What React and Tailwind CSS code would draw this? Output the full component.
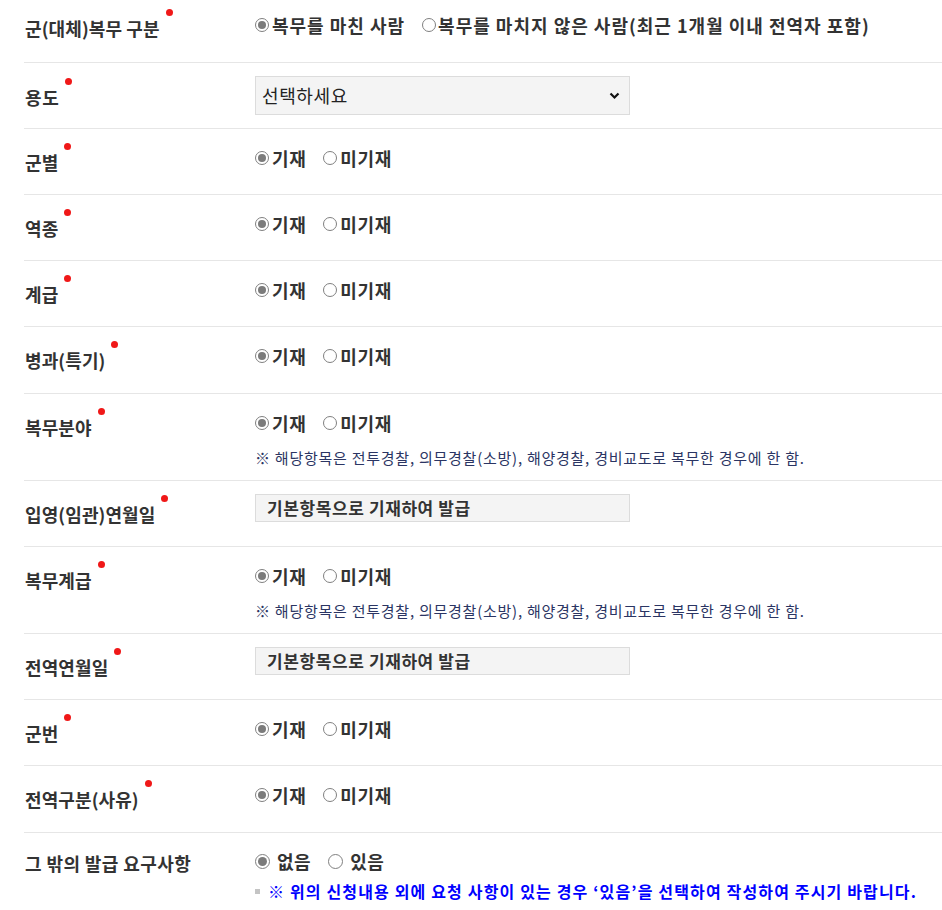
import React, { useState } from 'react';

const FONT = { fontFamily: '"Noto Sans CJK KR", "Noto Sans", sans-serif' };

// 단순 기재/미기재 항목
const rows = [
  { key: 'unit', label: '군별' },
  { key: 'kind', label: '역종' },
  { key: 'rank', label: '계급' },
  { key: 'branch', label: '병과(특기)', tall: true },
  { key: 'field', label: '복무분야', note: true },
  { key: 'enlist', label: '입영(임관)연월일', fixed: true },
  { key: 'svcRank', label: '복무계급', note: true },
  { key: 'discharge', label: '전역연월일', fixed: true },
  { key: 'number', label: '군번' },
  { key: 'reason', label: '전역구분(사유)', tall: true },
];

function Required({ children }) {
  return (
    <span className="relative inline-block">
      {children}
      <span className="absolute right-[-13px] top-[-7px] w-[7px] h-[7px] rounded-full bg-[#f01818]" />
    </span>
  );
}

function Radio({ checked, onClick, size = 'sm', children }) {
  const box = size === 'lg' ? 'w-[15px] h-[15px]' : 'w-[14px] h-[14px]';
  const dot = size === 'lg' ? 'w-[9px] h-[9px]' : 'w-[8px] h-[8px]';
  return (
    <label onClick={onClick} className="inline-flex items-center cursor-pointer">
      <span className={`${box} rounded-full border border-[#808080] bg-white flex items-center justify-center shrink-0`}>
        {checked && <span className={`${dot} rounded-full bg-[#7b7b7b]`} />}
      </span>
      {children}
    </label>
  );
}

function Note() {
  return (
    <p className="mt-[12px] text-[15px] leading-[22px] tracking-[0.75px] text-[#2b3563]">
      ※ 해당항목은 전투경찰, 의무경찰(소방), 해양경찰, 경비교도로 복무한 경우에 한 함.
    </p>
  );
}

function FixedBox() {
  return (
    <div className="mt-[-4px] w-[375px] h-[28px] bg-[#f4f4f4] border border-[#dcdcdc] pl-[11px] flex items-center text-[17px] tracking-[0.6px] font-bold text-[#333]">
      기본항목으로 기재하여 발급
    </div>
  );
}

export default function App() {
  const [values, setValues] = useState({});
  const [served, setServed] = useState('done');
  const [extra, setExtra] = useState('no');

  const pick = (key, v) => setValues((s) => ({ ...s, [key]: v }));

  return (
    <div style={FONT} className="bg-white w-[942px] min-h-[910px] text-[#333]">
      <div className="ml-[24px]">
        {/* 군(대체)복무 구분 */}
        <div className="flex h-[63px] border-b border-[#e6e6e6]">
          <div className="w-[231px] pl-[1px] pt-[16px] text-[18px] leading-[24px] tracking-[0.1px] font-bold">
            <Required>군(대체)복무 구분</Required>
          </div>
          <div className="pt-[13px] flex items-center h-[37px] text-[18px] leading-[24px] tracking-[1px] font-bold">
            <Radio checked={served === 'done'} onClick={() => setServed('done')}>
              <span className="ml-[3px]">복무를 마친 사람</span>
            </Radio>
            <span className="w-[17px]" />
            <Radio checked={served === 'not'} onClick={() => setServed('not')}>
              <span className="ml-[2px]">복무를 마치지 않은 사람(최근 1개월 이내 전역자 포함)</span>
            </Radio>
          </div>
        </div>

        {/* 용도 */}
        <div className="flex h-[66px] border-b border-[#e6e6e6]">
          <div className="w-[231px] pl-[1px] pt-[22px] text-[18px] leading-[24px] tracking-[0.6px] font-bold">
            <Required>용도</Required>
          </div>
          <div className="pt-[13px]">
            <div className="relative w-[375px] h-[39px]">
              <select
                style={FONT}
                className="appearance-none w-full h-full bg-[#f4f4f4] border border-[#dcdcdc] pl-[6px] text-[18px] tracking-[0.6px] text-[#222] outline-none"
                defaultValue=""
              >
                <option value="">선택하세요</option>
                <option value="1">제출용</option>
                <option value="2">확인용</option>
              </select>
              <svg className="absolute right-[10px] top-[16px] pointer-events-none" width="11" height="8" viewBox="0 0 11 8">
                <path d="M1.5 1.5 L5.5 5.5 L9.5 1.5" fill="none" stroke="#111" strokeWidth="2.2" />
              </svg>
            </div>
          </div>
        </div>

        {rows.map((r) => {
          const v = values[r.key] ?? 'yes';
          const h = r.note ? 'h-[87px]' : r.tall ? 'h-[67px]' : 'h-[66px]';
          return (
            <div key={r.key} className={`flex border-b border-[#e6e6e6] ${h}`}>
              <div className="w-[231px] pl-[1px] pt-[21px] text-[18px] leading-[24px] tracking-[0.1px] font-bold">
                <Required>{r.label}</Required>
              </div>
              <div className="pt-[17px]">
                {r.fixed ? (
                  <FixedBox />
                ) : (
                  <div className="flex items-center h-[24px] text-[18px] leading-[24px] tracking-[0.6px] font-bold">
                    <Radio checked={v === 'yes'} onClick={() => pick(r.key, 'yes')}>
                      <span className="ml-[3px]">기재</span>
                    </Radio>
                    <span className="w-[17px]" />
                    <Radio checked={v === 'no'} onClick={() => pick(r.key, 'no')}>
                      <span className="ml-[3px]">미기재</span>
                    </Radio>
                  </div>
                )}
                {r.note && <Note />}
              </div>
            </div>
          );
        })}

        {/* 그 밖의 발급 요구사항 */}
        <div className="flex h-[78px]">
          <div className="w-[231px] pl-[1px] pt-[18px] text-[18px] leading-[24px] tracking-[0.4px] font-bold">
            그 밖의 발급 요구사항
          </div>
          <div className="pt-[16px]">
            <div className="flex items-center h-[24px] text-[18px] leading-[24px] tracking-[0.5px] font-bold">
              <Radio size="lg" checked={extra === 'no'} onClick={() => setExtra('no')}>
                <span className="ml-[7px]">없음</span>
              </Radio>
              <span className="w-[17px]" />
              <Radio size="lg" checked={extra === 'yes'} onClick={() => setExtra('yes')}>
                <span className="ml-[7px]">있음</span>
              </Radio>
            </div>
            <div className="mt-[7px] flex items-center text-[16px] leading-[22px] tracking-[1.15px] font-bold text-[#0000ff]">
              <span className="w-[5px] h-[5px] bg-[#c4c4c4] mr-[8px]" />
              ※ 위의 신청내용 외에 요청 사항이 있는 경우 ‘있음’을 선택하여 작성하여 주시기 바랍니다.
            </div>
          </div>
        </div>
      </div>
    </div>
  );
}
